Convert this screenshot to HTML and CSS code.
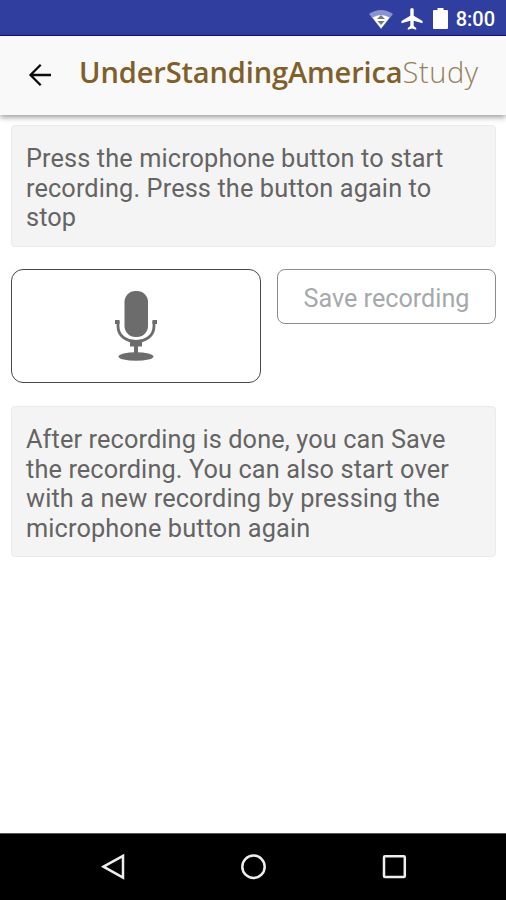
FILE: index.html
```html
<!DOCTYPE html>
<html lang="en">
<head>
<meta charset="utf-8">
<title>UnderStandingAmericaStudy</title>
<link rel="stylesheet" href="styles.css">
</head>
<body>
<div class="status">
  <svg width="24" height="20" viewBox="0 0 24 20"><path d="M0 5Q12-3 24 5L12 20Z" fill="#8993d2"/><path d="M3.500 8.500Q12 3.500 20.500 8.500L12 19.500Z" fill="#fff"/><path d="M12 6l4 4H8zM8.500 12h7L12 16z" fill="#747b78"/></svg>
  <svg class="plane" width="22" height="22" viewBox="0 0 22 22"><path d="M11 0c1 0 1.700.8 1.700 1.800v6L21.500 13v2.300l-8.800-2.600v5.400l2.500 1.800v1.800L11 20.500l-4.200 1.200v-1.800l2.500-1.800v-5.400L.5 15.300V13l8.800-5.200v-6C9.300.8 10 0 11 0z" fill="#fff"/></svg>
  <svg class="battery" width="15" height="21" viewBox="0 0 15 21"><path d="M4.500 0h6v2H14q1 0 1 1v17q0 1-1 1H1q-1 0-1-1V3q0-1 1-1h3.500z" fill="#fff"/></svg>
  <span class="clock">8:00</span>
</div>
<header class="appbar">
  <svg class="back" width="24" height="24" viewBox="0 0 24 24" fill="none" stroke="#0c0c0c" stroke-width="2.300"><path d="M12.700 1.800L2.500 12l10.200 10.200M2.500 12H23"/></svg>
  <h1 class="brand"><span class="strong">UnderStandingAmerica</span><span class="light">Study</span></h1>
</header>
<main class="content">
  <p class="note">Press the microphone button to start<br>recording. Press the button again to<br>stop</p>
  <div class="actions">
    <button class="record" aria-label="Record">
      <svg width="44" height="72" viewBox="0 0 44 72"><rect x="10.500" y="1" width="23.500" height="46" rx="11" fill="#6c6c6c"/><path d="M1 32H5.500M38.500 32H43" stroke="#6c6c6c" stroke-width="4"/><path d="M4 31v5C4 46 12 51.300 22 51.300S40 46 40 36v-5" fill="none" stroke="#6c6c6c" stroke-width="2.800"/><path d="M16 51.500h12v5h-4v8h-4v-8H16z" fill="#6c6c6c"/><ellipse cx="22" cy="66.500" rx="17.500" ry="4.300" fill="#6c6c6c"/></svg>
    </button>
    <button class="save">Save recording</button>
  </div>
  <p class="note">After recording is done, you can Save<br>the recording. You can also start over<br>with a new recording by pressing the<br>microphone button again</p>
</main>
<nav class="navbar">
  <svg width="28" height="28" viewBox="0 0 28 28"><path d="M5.500 13.700L25 2.800v21.800z"/></svg>
  <svg width="28" height="28" viewBox="0 0 28 28"><circle cx="14.500" cy="13.700" r="11.200"/></svg>
  <svg width="28" height="28" viewBox="0 0 28 28"><rect x="4" y="3.200" width="20.800" height="20.800" rx="1"/></svg>
</nav>
</body>
</html>
```
FILE: styles.css
```css
* { box-sizing: border-box; }
body {
  margin: 0;
  height: 900px;
  display: flex;
  flex-direction: column;
  background: #fff;
  font-family: Roboto, "Liberation Sans", sans-serif;
  overflow: hidden;
}
svg { display: block; flex: none; }
.status {
  height: 36px;
  flex: none;
  display: flex;
  align-items: center;
  justify-content: flex-end;
  padding: 2px 11px 0 0;
  background: #303f9f;
  border-bottom: 1px solid #10108c;
}
.plane { margin-left: 8px; }
.battery { margin-left: 10px; }
.clock {
  margin-left: 8px;
  padding-top: 1px;
  color: #fff;
  font-size: 20px;
  line-height: 24px;
  font-weight: 500;
}
.appbar {
  height: 79px;
  flex: none;
  display: flex;
  align-items: center;
  padding: 0 0 2px 28px;
  background: #f9f9f9;
  box-shadow: 0 2px 6px rgba(0, 0, 0, .42);
  z-index: 1;
}
.brand {
  margin: 0 0 5px 27px;
  font-family: "Open Sans", sans-serif;
  font-size: 29px;
  line-height: 40px;
  white-space: nowrap;
}
.strong { font-weight: 600; color: #80602a; letter-spacing: -.12px; }
.light { font-weight: 300; color: #94805c; letter-spacing: .6px; }
.content { flex: 1; padding: 10px 10px 0 11px; }
.note {
  margin: 0;
  padding: 18px 14px 13px;
  border: 1px solid #ebebeb;
  border-radius: 4px;
  background: #f4f4f4;
  color: #646464;
  font-size: 25.3px;
  line-height: 29.5px;
  letter-spacing: .12px;
  white-space: nowrap;
}
.actions {
  display: flex;
  align-items: flex-start;
  gap: 16px;
  margin: 22.5px 0 23px;
}
button { padding: 0; background: #fff; font-family: inherit; }
.record {
  width: 250px;
  height: 114px;
  display: flex;
  align-items: center;
  justify-content: center;
  border: 1px solid #484848;
  border-radius: 12px;
}
.save {
  width: 219px;
  height: 55px;
  padding-top: 3px;
  border: 1px solid #8c8c8c;
  border-radius: 8px;
  color: #a6a9ac;
  font-size: 25.2px;
}
.navbar {
  height: 67px;
  flex: none;
  display: flex;
  align-items: center;
  justify-content: space-between;
  padding: 0 98px;
  background: #000;
  border-top: 1px solid #555;
  fill: none;
  stroke: #eee;
  stroke-width: 2.5;
}
```
